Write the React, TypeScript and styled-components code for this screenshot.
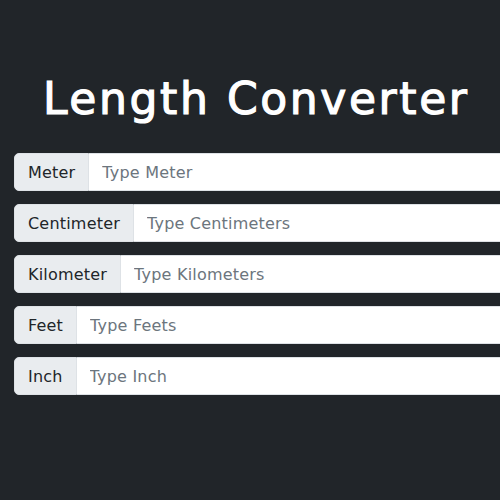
import styled, { createGlobalStyle } from 'styled-components';

const GlobalStyle = createGlobalStyle`
    html, body {
        margin: 0;
        padding: 0;
        background: #212529;
        overflow: hidden;
    }
    * {
        box-sizing: border-box;
    }
`;

const Page = styled.div`
    width: 500px;
    height: 500px;
    padding: 0 0 0 14px;
    overflow: hidden;
    font-family: 'DejaVu Sans', sans-serif;
`;

const Title = styled.h1`
    margin: 0;
    padding: 71px 0 0 29px;
    height: 153px;
    font-family: 'DejaVu Sans', sans-serif;
    font-weight: 400;
    font-size: 44px;
    line-height: 56px;
    letter-spacing: 2.6px;
    -webkit-text-stroke: 1.2px #fff;
    color: #fff;
    white-space: nowrap;
`;

const Form = styled.div`
    display: flex;
    flex-direction: column;
    gap: 13px;
    width: 520px;
`;

const Group = styled.div`
    display: flex;
    height: 38px;
`;

const Label = styled.span`
    display: flex;
    align-items: center;
    padding: 0 13px;
    background: #e9ecef;
    border: 1px solid #dee2e6;
    border-radius: 5px 0 0 5px;
    color: #212529;
    font-size: 16px;
    letter-spacing: 0.2px;
    white-space: nowrap;
`;

const Input = styled.input`
    flex: 1;
    min-width: 0;
    padding: 0 13px;
    border: 1px solid #dee2e6;
    border-left: none;
    border-radius: 0 5px 5px 0;
    background: #fff;
    font-family: inherit;
    font-size: 16px;
    letter-spacing: 0.2px;
    color: #212529;
    outline: none;
    &::placeholder {
        color: #6c757d;
    }
`;

const units = [
    { label: 'Meter', placeholder: 'Type Meter' },
    { label: 'Centimeter', placeholder: 'Type Centimeters' },
    { label: 'Kilometer', placeholder: 'Type Kilometers' },
    { label: 'Feet', placeholder: 'Type Feets' },
    { label: 'Inch', placeholder: 'Type Inch' },
];

export default function App() {
    return (
        <>
            <GlobalStyle />
            <Page>
                <Title>Length Converter</Title>
                <Form>
                    {units.map((u) => (
                        <Group key={u.label}>
                            <Label>{u.label}</Label>
                            <Input placeholder={u.placeholder} />
                        </Group>
                    ))}
                </Form>
            </Page>
        </>
    );
}
